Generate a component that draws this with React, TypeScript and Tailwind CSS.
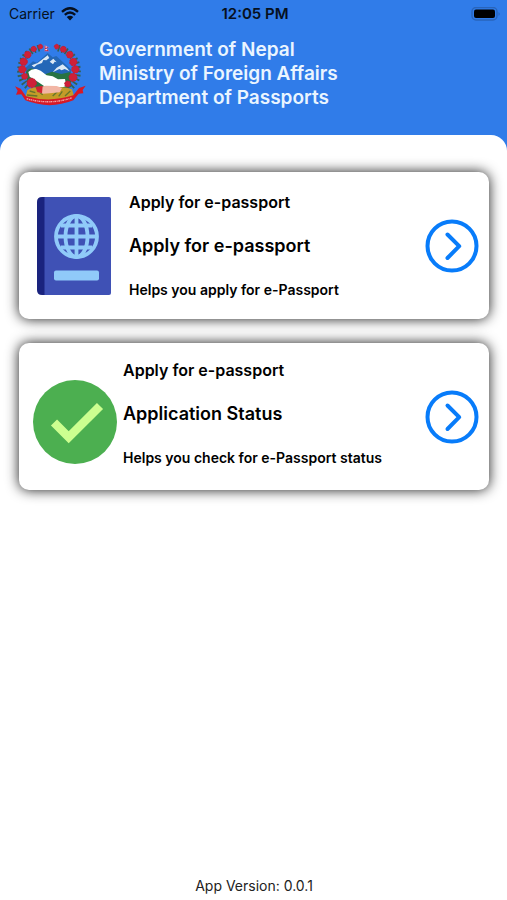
import type { ReactNode } from "react";

const flowers = [
  [123, 50, 7],
  [103, 57, 8],
  [85, 74, 10],
  [73, 95, 11],
  [69, 118, 11],
  [76, 139, 9],
  [97, 159, 14],
  [172, 50, 7],
  [192, 58, 9],
  [211, 74, 10],
  [222, 96, 11],
  [228, 118, 11],
  [221, 142, 12],
  [205, 162, 9],
];

function Emblem() {
  return (
    <svg viewBox="44 36 216 192" className="w-[72px] shrink-0" role="img" aria-label="Emblem of Nepal">
      {/* leaves behind the wreath */}
      <path
        d="M120 54 Q68 68 64 115 Q60 152 90 172M176 54 Q228 68 234 115 Q238 152 212 172"
        fill="none"
        stroke="#35604f"
        strokeWidth="20"
        strokeDasharray="5 7"
      />
      <path d="M78 114 L101 94 L113 98 L145 69 L160 82 L171 78 L216 119 L211 145 L82 143Z" fill="#2467b7" />
      <path
        d="M97 106 L115 99 L145 76 L150 84 L141 91 L132 90 L128 99 L113 104 L104 112ZM151 95 L162 86 L172 97 L166 95 L161 103ZM172 113 L190 103 L203 114 L211 124 L196 117 L187 121 L180 117 L160 127Z"
        fill="#dce9f5"
      />
      <path d="M80 126 Q88 111 105 117 L137 133 L158 125 L186 132 L213 126 L216 170 L190 184 L112 176 L84 160Z" fill="#287342" />
      <path d="M87 126 Q97 115 111 117 L124 122 L142 136 L160 139 L176 148 L197 147 L201 168 L190 172 L160 171 L134 168 L115 155 L91 140Z" fill="#fff" />
      <path d="M84 181 Q108 164 151 177 Q191 166 218 178 L224 199 Q150 223 79 199Z" fill="#c49b28" />
      <path
        d="M91 183 L108 188M83 195 L114 198M117 183 L130 194M177 182 L160 198M189 184 L178 199M213 183 L197 198"
        stroke="#65752b"
        strokeWidth="4"
      />
      <path d="M118 172 L139 167 L172 168 L188 174 L181 187 L151 190 L132 191 L117 186Z" fill="#f2b6a5" />
      <path d="M108 170 L130 168 L128 190 L114 186Z" fill="#cf2430" />
      <path d="M47 169 L64 176 L80 199 Q151 219 222 196 L239 174 L259 167 L250 180 L252 190 L238 191 L222 211 Q151 240 78 211 L66 193 L50 194 L55 182Z" fill="#d71926" />
      <path
        d="M82 206 Q151 226 219 203"
        fill="none"
        stroke="#f0a6a9"
        strokeWidth="4"
        strokeDasharray="5 2 3 2"
      />
      {flowers.map(([x, y, r]) => (
        <circle
          key={`${x}-${y}`}
          cx={x}
          cy={y}
          r={r}
          fill="#cf2038"
          stroke="#c31d37"
          strokeWidth="3"
          strokeDasharray="6 3"
        />
      ))}
      <path d="M136 45 L150 53 L142 55 L150 64 L136 64Z" fill="#d52136" stroke="#6f83df" strokeWidth="2" />
      <path d="M138 51h5M138 59h5" stroke="#fff" strokeWidth="3" />
    </svg>
  );
}

function WifiIcon() {
  return (
    <svg viewBox="0 0 18 14" className="w-[18px]" aria-hidden="true">
      <path
        d="M1 4.8 Q9 -2.3 17 4.8M3.8 7.8 Q9 3.4 14.2 7.8"
        fill="none"
        stroke="#061020"
        strokeWidth="2.4"
      />
      <path d="M5.7 10.1 Q9 7.4 12.3 10.1 L9 13.5Z" fill="#061020" />
    </svg>
  );
}

function BatteryIcon() {
  return (
    <svg viewBox="0 0 31 15" className="w-[31px]" aria-hidden="true">
      <rect x="2" y="0.500" width="25" height="12.500" rx="4" fill="none" stroke="#2964ba" strokeWidth="1.4" />
      <rect x="4" y="2.500" width="21" height="8.500" rx="2" fill="#000" />
      <path d="M28.5 5 Q31 7 28.5 9Z" fill="#2964ba" />
    </svg>
  );
}

function PassportIcon() {
  return (
    <svg viewBox="0 0 74 98" className="w-[74px] shrink-0" aria-hidden="true">
      <path d="M8 0 H5 Q0 0 0 5 V93 Q0 98 5 98 H8Z" fill="#1a237e" />
      <path d="M7.5 0 H72 Q74 0 74 2 V96 Q74 98 72 98 H7.5Z" fill="#3f51b5" />
      <g fill="none" stroke="#90caf9" strokeWidth="3.8">
        <circle cx="39.500" cy="39.500" r="20.500" />
        <ellipse cx="39.500" cy="39.500" rx="11" ry="20.500" />
        <path d="M39.500 19V60M19 39.500H60M24 28.500H55M24 50.500H55" />
      </g>
      <rect x="17" y="73.500" width="45" height="10" rx="2" fill="#90caf9" />
    </svg>
  );
}

function StatusIcon() {
  return (
    <svg viewBox="0 0 84 84" className="mt-[11px] w-[84px] shrink-0" aria-hidden="true">
      <circle cx="42" cy="42" r="42" fill="#4caf50" />
      <path d="M21 42.500 L35.700 57.200 L67 26" fill="none" stroke="#ccff90" strokeWidth="8.600" />
    </svg>
  );
}

type CardProps = {
  icon: ReactNode;
  title: string;
  description: string;
  className: string;
  bodyClassName: string;
};

function ServiceCard({ icon, title, description, className, bodyClassName }: CardProps) {
  return (
    <section
      className={`flex items-center rounded-[10px] bg-white pr-[10px] text-black shadow-[0_0_13px_rgba(0,0,0,0.9)] ${className}`}
    >
      {icon}
      <div className={`flex min-w-0 flex-1 flex-col gap-5 font-semibold ${bodyClassName}`}>
        <p className="text-base leading-5">Apply for e-passport</p>
        <h2 className="text-lg leading-7">{title}</h2>
        <p className="text-sm leading-5">{description}</p>
      </div>
      <button type="button" aria-label={title} className="shrink-0">
        <svg viewBox="0 0 54 54" className="w-[54px]" fill="none" stroke="#087cfa" strokeWidth="4" aria-hidden="true">
          <circle cx="27" cy="27" r="24.500" />
          <path d="M22.500 15.500 L34.200 27.200 L22.500 39" strokeLinecap="round" strokeLinejoin="round" />
        </svg>
      </button>
    </section>
  );
}

export default function App() {
  return (
    <div className="flex min-h-screen flex-col bg-[#307ce9] font-['Inter',sans-serif]">
      <div className="grid h-7 grid-cols-3 items-center pr-1.5 pl-[9px] text-sm text-[#061020]">
        <div className="flex items-center gap-1.5">
          <span>Carrier</span>
          <WifiIcon />
        </div>
        <span className="text-center text-[15px] font-semibold">12:05 PM</span>
        <div className="flex justify-end">
          <BatteryIcon />
        </div>
      </div>

      <header className="flex items-center gap-[13px] px-[14px] pt-[10px] pb-[25px]">
        <Emblem />
        <h1 className="text-[19px] leading-6 font-semibold text-[#eaf5ff]">
          Government of Nepal
          <br />
          Ministry of Foreign Affairs
          <br />
          Department of Passports
        </h1>
      </header>

      <main className="flex flex-1 flex-col rounded-t-2xl bg-white pt-[37px] pr-[18px] pb-1 pl-[19px]">
        <div className="flex flex-col gap-6">
          <ServiceCard
            icon={<PassportIcon />}
            title="Apply for e-passport"
            description="Helps you apply for e-Passport"
            className="gap-[18px] pl-[18px]"
            bodyClassName="pt-5 pb-[19px]"
          />
          <ServiceCard
            icon={<StatusIcon />}
            title="Application Status"
            description="Helps you check for e-Passport status"
            className="gap-1.5 pl-[14px]"
            bodyClassName="pt-[17px] pb-[22px]"
          />
        </div>
        <p className="mt-auto text-center text-sm leading-5 text-[#222]">App Version: 0.0.1</p>
      </main>
    </div>
  );
}
